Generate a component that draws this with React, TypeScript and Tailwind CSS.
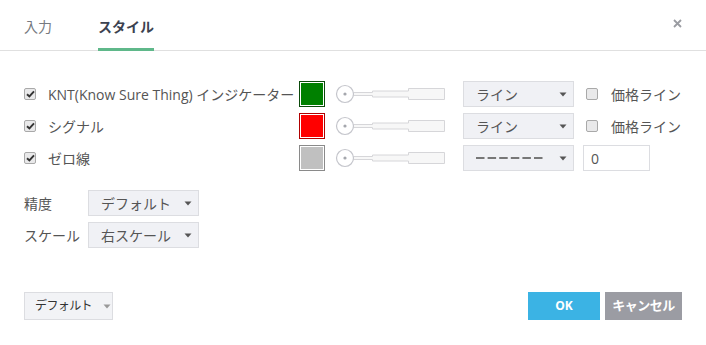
import React from "react";

const font = { fontFamily: '"Open Sans", "Noto Sans CJK JP", sans-serif' };

function Check({ checked }: { checked: boolean }) {
  return (
    <div className="w-[12px] h-[12px] border border-[#a9a9a9] bg-[#e9e9ea] rounded-[2px] flex items-center justify-center">
      {checked && (
        <svg width="9" height="8" viewBox="0 0 9 8">
          <path d="M1 4.2 L3.4 6.5 L8 1.3" stroke="#333" strokeWidth="1.9" fill="none" />
        </svg>
      )}
    </div>
  );
}

function Swatch({ fill, border }: { fill: string; border: string }) {
  return (
    <div className="w-[26px] h-[26px] p-[1px] bg-white border" style={{ borderColor: border }}>
      <div className="w-full h-full" style={{ background: fill }} />
    </div>
  );
}

function Slider() {
  return (
    <svg width="114" height="22" viewBox="0 0 114 22">
      <path d="M20 9.5 H39.5 V8 H75.5 V5.5 H111.5 V16.5 H75.5 V14 H39.5 V12.5 H20 Z" fill="#f7f7f7" stroke="#d6d6d9" strokeWidth="1" />
      <circle cx="12" cy="11" r="8.5" fill="white" stroke="#c5c6cc" strokeWidth="1.2" />
      <circle cx="12" cy="11" r="1.6" fill="#a5a7ad" />
    </svg>
  );
}

function Arrow({ color = "#555" }: { color?: string }) {
  return (
    <svg width="8" height="5" viewBox="0 0 8 5">
      <path d="M0.5 0.5 H7.5 L4 4.5 Z" fill={color} />
    </svg>
  );
}

function Select({ children, w }: { children: React.ReactNode; w: string }) {
  return (
    <div className={`${w} h-[26px] bg-[#f0f1f5] border border-[#dcdde1] flex items-center justify-between pl-[12px] pr-[6px] text-[14px] text-[#555]`}>
      <span>{children}</span>
      <Arrow />
    </div>
  );
}

function Dashes() {
  return (
    <svg width="68" height="4" viewBox="0 0 68 4">
      {[0, 1, 2, 3, 4, 5].map((i) => (
        <rect key={i} x={i * 11.6} y="1" width="8.5" height="2" fill="#777" />
      ))}
    </svg>
  );
}

function Row({ label, fill, border, last }: { label: string; fill: string; border: string; last?: boolean }) {
  return (
    <div className="flex items-center h-[26px]">
      <div className="w-[24px]">
        <Check checked />
      </div>
      <div className="w-[251px] text-[14px] text-[#555] whitespace-nowrap">{label}</div>
      <Swatch fill={fill} border={border} />
      <div className="ml-[8px] w-[130px]">
        <Slider />
      </div>
      {last ? (
        <>
          <div className="w-[111px] h-[26px] bg-[#f0f1f5] border border-[#dcdde1] flex items-center justify-between pl-[12px] pr-[6px]">
            <Dashes />
            <Arrow />
          </div>
          <div className="ml-[9px] w-[67px] h-[26px] border border-[#dcdde1] bg-white flex items-center pl-[7px] text-[14px] text-[#555]">0</div>
        </>
      ) : (
        <>
          <Select w="w-[111px]">ライン</Select>
          <div className="ml-[12px] mr-[13px]">
            <Check checked={false} />
          </div>
          <span className="text-[14px] text-[#555] whitespace-nowrap">価格ライン</span>
        </>
      )}
    </div>
  );
}

export default function App() {
  return (
    <div className="w-[706px] h-[345px] bg-white flex flex-col" style={font}>
      <div className="h-[51px] border-b border-[#e0e0e0] flex items-stretch px-[24px] relative">
        <div className="flex items-center text-[14px] text-[#777a80] pt-[3px]">入力</div>
        <div className="ml-[46px] flex flex-col justify-center relative">
          <span className="text-[14px] font-bold text-[#3c4250] pt-[3px]">スタイル</span>
          <div className="absolute left-0 right-0 bottom-[-1px] h-[3px] bg-[#5fb88a]" />
        </div>
        <div className="ml-auto flex items-center pb-[4px] text-[#9a9aa0]">
          <svg width="9" height="9" viewBox="0 0 9 9">
            <path d="M1 1 L8 8 M8 1 L1 8" stroke="#9a9ca2" strokeWidth="1.8" />
          </svg>
        </div>
      </div>
      <div className="pt-[30px] px-[24px] flex flex-col gap-[6px]">
        <Row label="KNT(Know Sure Thing) インジケーター" fill="#008000" border="#0b4a0b" />
        <Row label="シグナル" fill="#ff0000" border="#b00000" />
        <Row label="ゼロ線" fill="#c0c0c0" border="#8a8a8a" last />
      </div>
      <div className="pt-[19px] px-[24px] flex flex-col gap-[6px]">
        <div className="flex items-center">
          <span className="w-[64px] text-[14px] text-[#555]">精度</span>
          <Select w="w-[111px]">デフォルト</Select>
        </div>
        <div className="flex items-center">
          <span className="w-[64px] text-[14px] text-[#555]">スケール</span>
          <Select w="w-[111px]">右スケール</Select>
        </div>
      </div>
      <div className="mt-[44px] px-[24px] flex items-center">
        <div className="w-[89px] h-[28px] bg-[#f2f3f6] border border-[#dcdde1] flex items-center pl-[10px] gap-[11px] text-[12px] text-[#333] tracking-[-0.6px]">
          <span>デフォルト</span>
          <Arrow color="#999" />
        </div>
        <div className="ml-auto w-[72px] h-[28px] bg-[#3bb3e4] text-white text-[12px] font-bold flex items-center justify-center">OK</div>
        <div className="ml-[5px] w-[77px] h-[28px] bg-[#9b9ca3] text-white text-[13px] font-bold flex items-center justify-center tracking-[-0.5px]">キャンセル</div>
      </div>
    </div>
  );
}
